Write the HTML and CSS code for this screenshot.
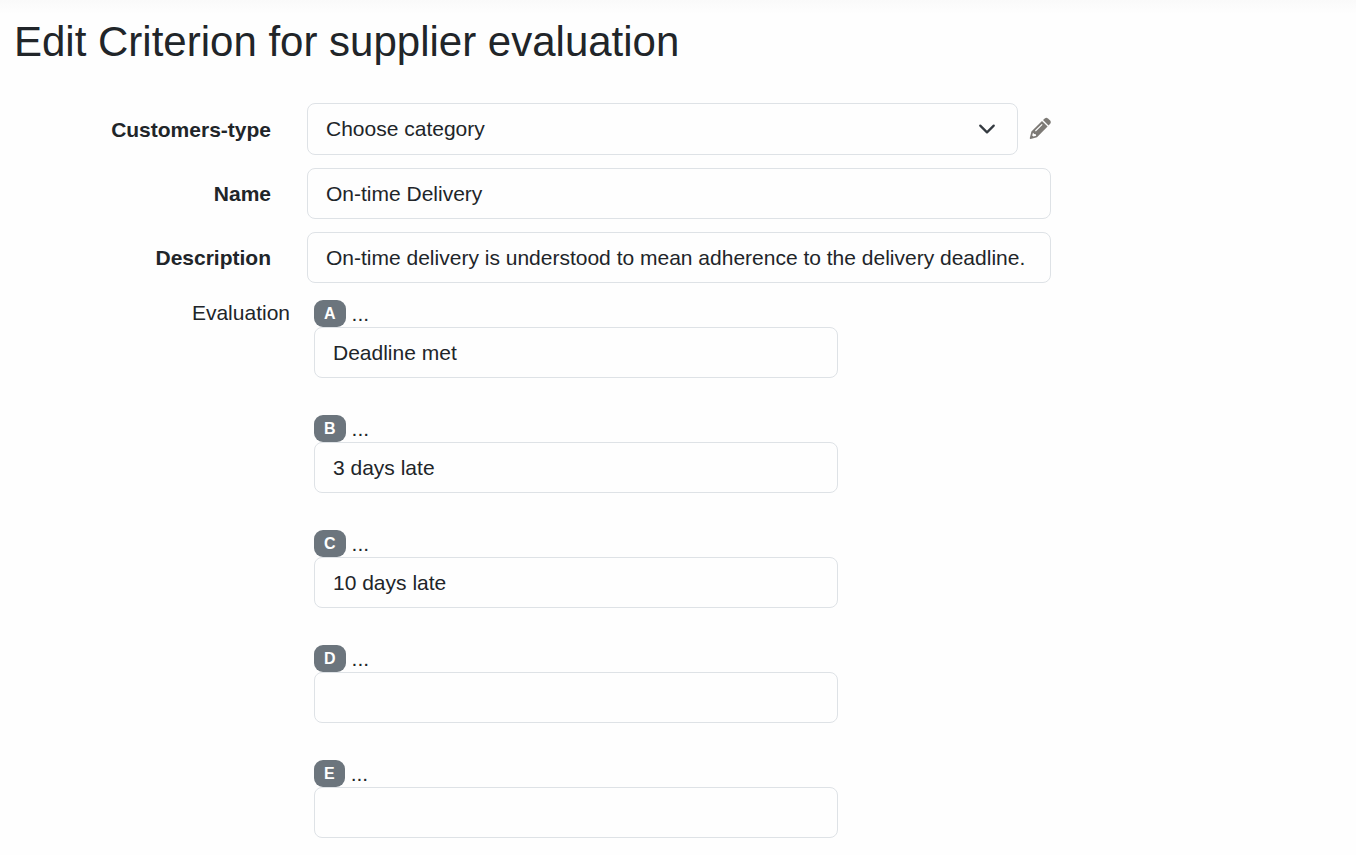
FILE: index.html
```html
<!DOCTYPE html>
<html lang="en">
<head>
<meta charset="utf-8">
<meta name="viewport" content="width=device-width, initial-scale=1">
<title>Edit Criterion for supplier evaluation</title>
<link rel="stylesheet" href="styles.css">
</head>
<body>
<main>
<h1 class="title">Edit Criterion for supplier evaluation</h1>
<form class="form">
  <div class="row">
    <label class="label" for="category">Customers-type</label>
    <div class="field">
      <select class="control select" id="category"><option>Choose category</option></select>
      <button class="edit" type="button" aria-label="Edit category">
        <svg width="22" height="24" viewBox="0 0 22 24" aria-hidden="true">
          <path fill="#7d7a76" fill-rule="evenodd" d="M13 4 18.6 9.6 8 20.2 1.6 22Q.6 22 .8 21L2.4 14.4ZM12.8 7 6 13.6 6.8 14.4 13.6 7.8ZM4 15.8 3.2 18.6 4.4 19.6 7.2 18.8 6.8 17.3 5.2 17.1Z"/>
          <path fill="#7d7a76" d="M14 3.1 15.8 1.4Q17.3.1 18.9 1.4L21.2 3.6Q22.4 5.1 21.2 6.7L19.5 8.6Z"/>
        </svg>
      </button>
    </div>
  </div>
  <div class="row">
    <label class="label" for="name">Name</label>
    <input class="control" id="name" type="text" value="On-time Delivery">
  </div>
  <div class="row">
    <label class="label" for="description">Description</label>
    <input class="control" id="description" type="text" value="On-time delivery is understood to mean adherence to the delivery deadline.">
  </div>
  <div class="evaluation" role="group" aria-labelledby="evaluation-label">
    <span class="evaluation-label" id="evaluation-label">Evaluation</span>
    <div class="grades">
      <div class="grade">
        <label class="grade-label" for="grade-a"><span class="badge">A</span> ...</label>
        <input class="control" id="grade-a" type="text" value="Deadline met">
      </div>
      <div class="grade">
        <label class="grade-label" for="grade-b"><span class="badge">B</span> ...</label>
        <input class="control" id="grade-b" type="text" value="3 days late">
      </div>
      <div class="grade">
        <label class="grade-label" for="grade-c"><span class="badge">C</span> ...</label>
        <input class="control" id="grade-c" type="text" value="10 days late">
      </div>
      <div class="grade">
        <label class="grade-label" for="grade-d"><span class="badge">D</span> ...</label>
        <input class="control" id="grade-d" type="text">
      </div>
      <div class="grade">
        <label class="grade-label" for="grade-e"><span class="badge">E</span> ...</label>
        <input class="control" id="grade-e" type="text">
      </div>
    </div>
  </div>
</form>
</main>
</body>
</html>
```
FILE: styles.css
```css
* { box-sizing: border-box; }

body {
  margin: 0;
  color: #212529;
  background: #fefefe linear-gradient(#fafafa, #fefefe 14px) no-repeat;
  font: 21px/32px "Liberation Sans", Arial, sans-serif;
}

.title {
  margin: 0;
  padding: 16px 14px 0;
  font-size: 42px;
  font-weight: 400;
  line-height: 52px;
}

.form {
  display: flex;
  flex-direction: column;
  gap: 13px;
  padding: 35px 0 17px;
}

.row {
  display: grid;
  grid-template-columns: 307fr 744fr 305fr;
  align-items: center;
}

.label {
  padding: 1px 36px 0 0;
  font-weight: 700;
  text-align: right;
}

.field {
  display: flex;
  align-items: center;
  gap: 11px;
}

.control {
  display: block;
  width: 100%;
  min-width: 0;
  height: 51px;
  padding: 0 18px;
  border: 1px solid #dee2e6;
  border-radius: 8px;
  color: inherit;
  background: transparent;
  font: inherit;
}

.select {
  flex: 1;
  height: 52px;
  appearance: none;
  background: url("data:image/svg+xml,%3Csvg xmlns='http://www.w3.org/2000/svg' viewBox='0 0 16 16'%3E%3Cpath fill='none' stroke='%23343a40' stroke-linecap='round' stroke-linejoin='round' stroke-width='2' d='m2 5 6 6 6-6'/%3E%3C/svg%3E") no-repeat right 21px center / 18px 18px;
}

.edit {
  display: flex;
  padding: 0;
  border: 0;
  background: none;
  cursor: pointer;
}

.evaluation {
  display: grid;
  grid-template-columns: 314fr 524fr 518fr;
}

.evaluation-label {
  padding: 1px 24px 0 0;
  text-align: right;
}

.grades {
  display: flex;
  flex-direction: column;
  gap: 37px;
  padding-top: 4px;
}

.grade-label {
  display: flex;
  align-items: center;
  gap: 6px;
  height: 27px;
  line-height: 30px;
}

.badge {
  padding: 0 10px;
  border-radius: 9px;
  color: #fff;
  background: #6c757d;
  font-size: 16px;
  font-weight: 700;
  line-height: 27px;
}
```
